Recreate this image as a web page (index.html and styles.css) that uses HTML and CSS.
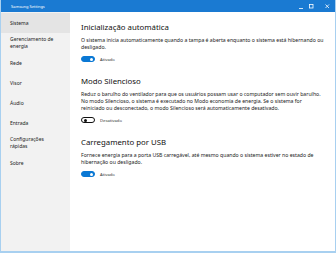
FILE: index.html
```html
<!DOCTYPE html>
<html lang="pt-BR">
<head>
    <meta charset="UTF-8">
    <meta name="viewport" content="width=device-width, initial-scale=1.0">
    <title>Samsung Settings</title>
    <link rel="stylesheet" href="styles.css">
</head>
<body>
    <div class="window">
        <div class="titlebar">
            <span class="title">Samsung Settings</span>
            <div class="controls">
                <svg width="46" height="12" viewBox="0 0 46 12">
                    <line x1="9" y1="8.5" x2="13" y2="8.5" stroke="#fff" stroke-width="0.8"/>
                    <rect x="19.5" y="4.5" width="3.5" height="3.5" fill="none" stroke="#fff" stroke-width="0.8"/>
                    <path d="M35.5 4.5 L39 8 M39 4.5 L35.5 8" stroke="#fff" stroke-width="0.8"/>
                </svg>
            </div>
        </div>
        <div class="main">
            <nav class="sidebar">
                <div class="nav-item active">Sistema</div>
                <div class="nav-item">Gerenciamento de<br>energia</div>
                <div class="nav-item">Rede</div>
                <div class="nav-item">Visor</div>
                <div class="nav-item">Áudio</div>
                <div class="nav-item">Entrada</div>
                <div class="nav-item">Configurações<br>rápidas</div>
                <div class="nav-item">Sobre</div>
            </nav>
            <div class="content">
                <div class="setting">
                    <h2>Inicialização automática</h2>
                    <p>O sistema inicia automaticamente quando a tampa é aberta enquanto o sistema está hibernando ou desligado.</p>
                    <div class="toggle-row">
                        <span class="toggle on"></span>
                        <span class="toggle-label">Ativado</span>
                    </div>
                </div>
                <div class="setting">
                    <h2>Modo Silencioso</h2>
                    <p>Reduz o barulho do ventilador para que os usuários possam usar o computador sem ouvir barulho.<br>No modo Silencioso, o sistema é executado no Modo economia de energia. Se o sistema for<br>reiniciado ou desconectado, o modo Silencioso será automaticamente desativado.</p>
                    <div class="toggle-row">
                        <span class="toggle"></span>
                        <span class="toggle-label">Desativado</span>
                    </div>
                </div>
                <div class="setting">
                    <h2>Carregamento por USB</h2>
                    <p>Fornece energia para a porta USB carregável, até mesmo quando o sistema estiver no estado de hibernação ou desligado.</p>
                    <div class="toggle-row">
                        <span class="toggle on"></span>
                        <span class="toggle-label">Ativado</span>
                    </div>
                </div>
            </div>
        </div>
    </div>
</body>
</html>
```

FILE: styles.css
```css
body {
    margin: 0;
    font-family: "Noto Sans", "Open Sans", sans-serif;
    background: #ffffff;
    color: #1a1a1a;
}
.window {
    width: 336px;
    height: 253px;
    box-sizing: border-box;
    border: 1px solid #a8d0f0;
    border-top: none;
    border-bottom-width: 2px;
    display: flex;
    flex-direction: column;
    overflow: hidden;
}
.titlebar {
    height: 12px;
    margin: 0 -1px;
    background-color: #1a7ad2;
    display: flex;
    align-items: center;
    justify-content: space-between;
    padding-left: 11px;
}
.title {
    color: #fff;
    font-size: 4px;
}
.controls svg {
    display: block;
}
.main {
    flex: 1;
    display: flex;
}
.sidebar {
    width: 69px;
    background-color: #f2f2f2;
    padding-top: 1px;
}
.nav-item {
    height: 20px;
    display: flex;
    align-items: center;
    padding-left: 9px;
    font-size: 5px;
    line-height: 7px;
    color: #222;
}
.nav-item.active {
    background-color: #e4e4e4;
}
.content {
    flex: 1;
    padding: 10px 6px 0 11px;
}
.setting {
    margin-bottom: 14px;
}
.setting h2 {
    margin: 0;
    font-size: 7.8px;
    line-height: 10px;
    font-weight: 400;
    color: #111;
}
.setting p {
    margin: 5px 0 0;
    font-size: 5.15px;
    line-height: 7px;
    color: #222;
}
.toggle-row {
    margin-top: 5px;
    display: flex;
    align-items: center;
    gap: 5px;
}
.toggle {
    position: relative;
    width: 14px;
    height: 6px;
    box-sizing: border-box;
    border: 1px solid #111;
    border-radius: 3px;
    background: #fff;
}
.toggle::after {
    content: "";
    position: absolute;
    top: 0.5px;
    left: 1.5px;
    width: 3px;
    height: 3px;
    border-radius: 50%;
    background: #111;
}
.toggle.on {
    background: #0a78d4;
    border-color: #0a78d4;
}
.toggle.on::after {
    left: auto;
    right: 1.5px;
    background: #fff;
}
.toggle-label {
    font-size: 4.2px;
    color: #333;
}
```
